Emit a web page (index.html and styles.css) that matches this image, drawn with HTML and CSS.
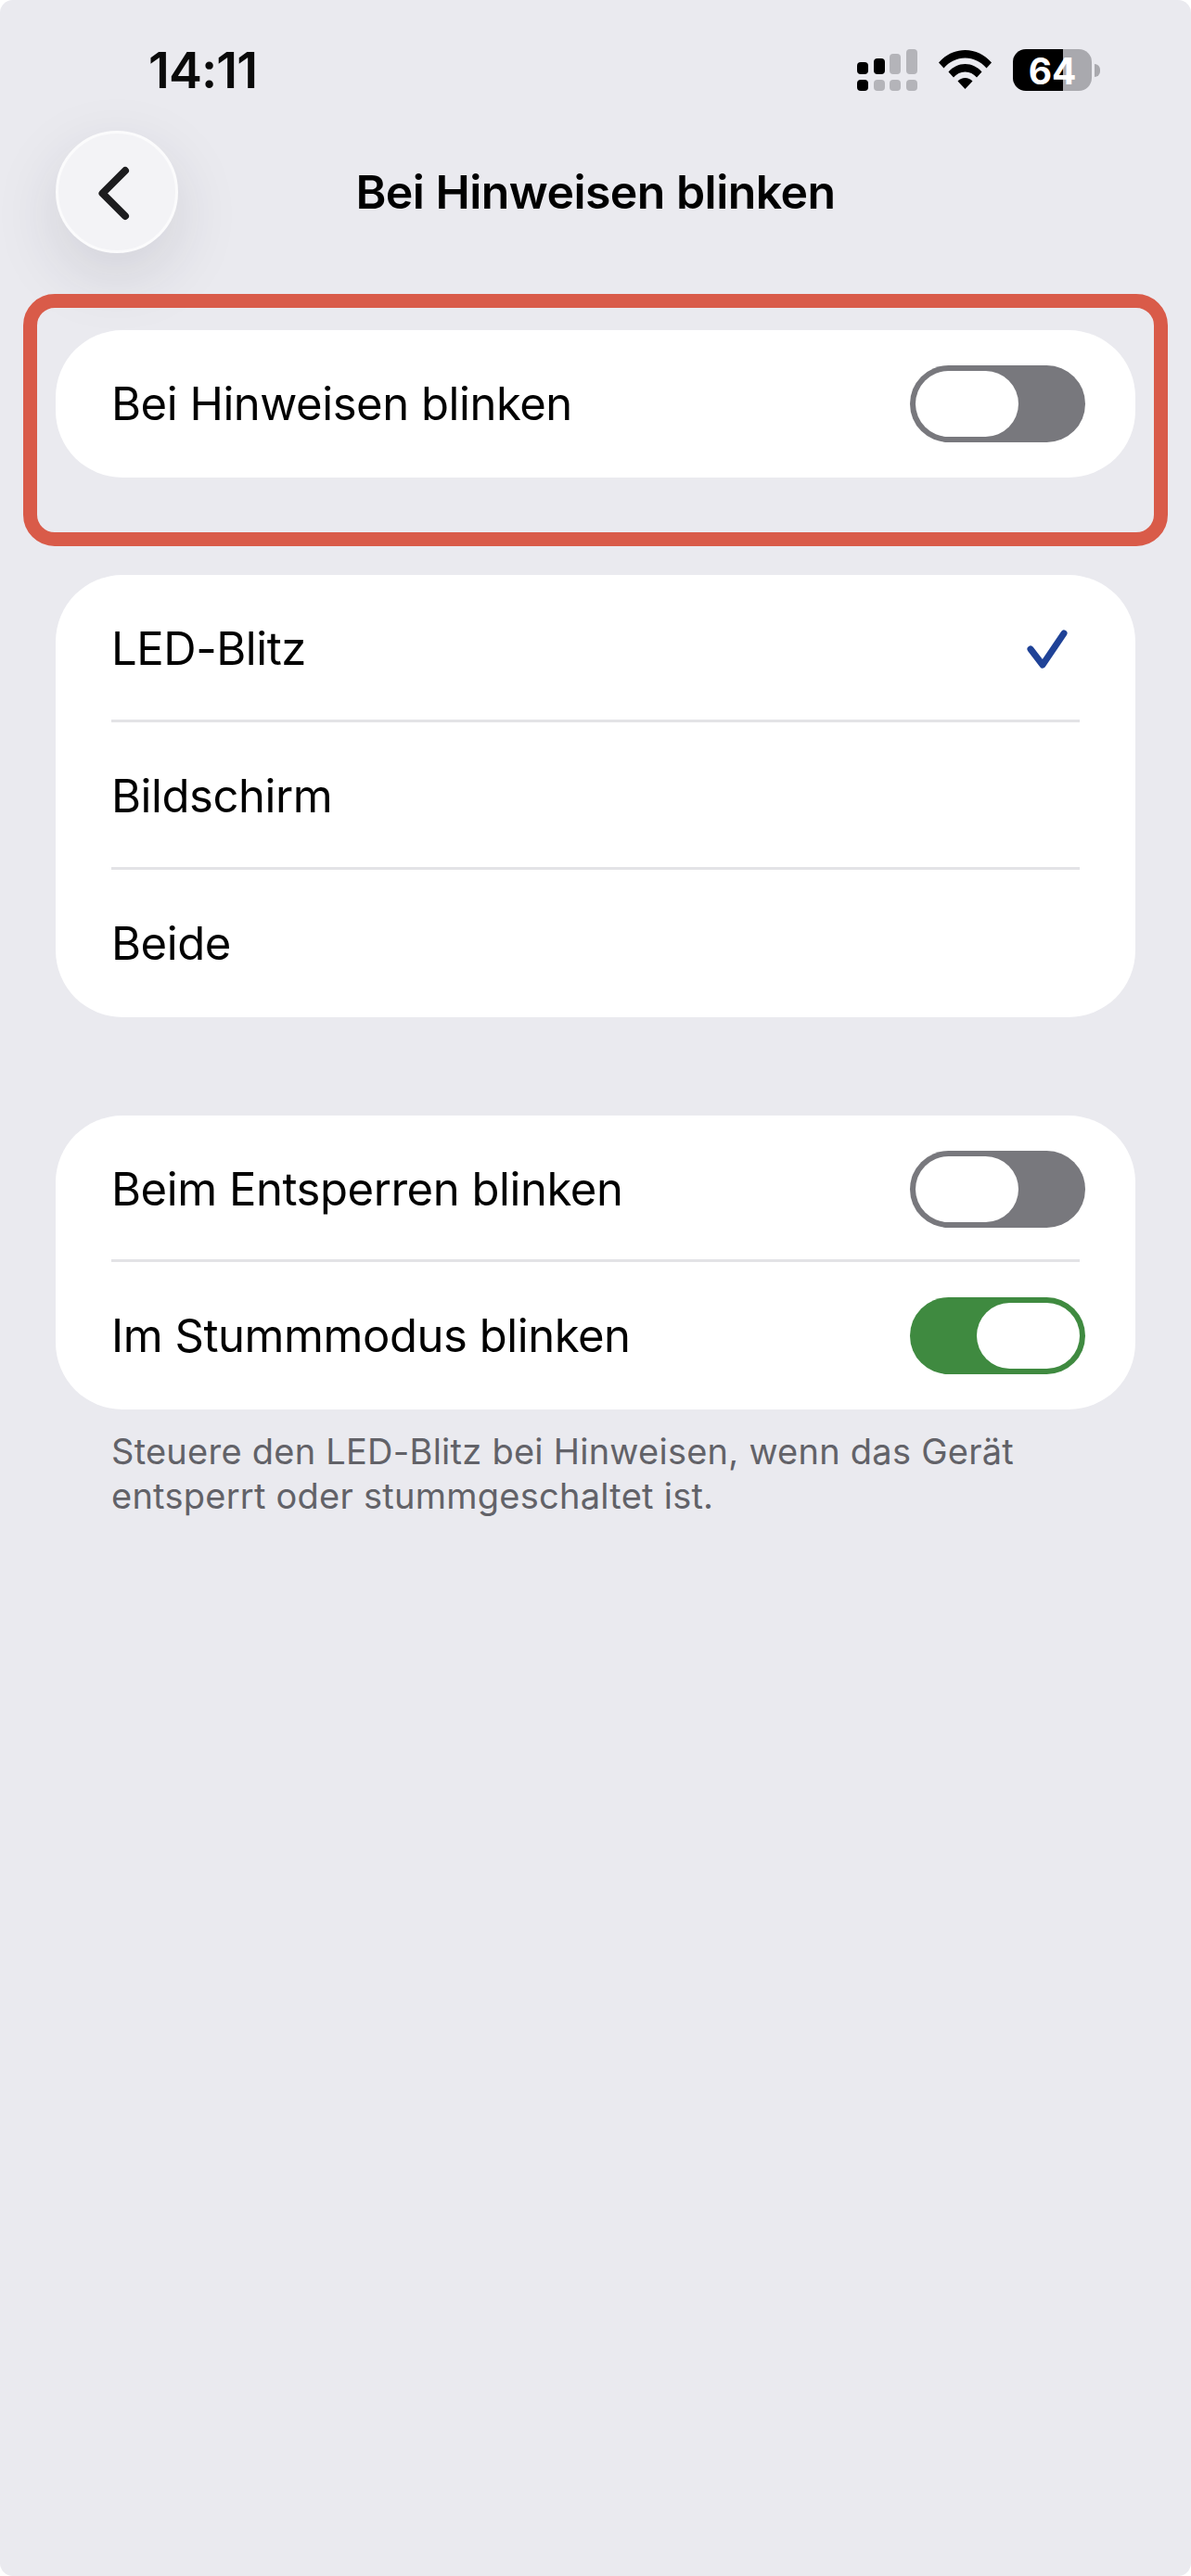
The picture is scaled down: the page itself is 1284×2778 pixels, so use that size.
FILE: index.html
```html
<!DOCTYPE html>
<html lang="de">
<head>
  <meta charset="UTF-8">
  <meta name="viewport" content="width=device-width, initial-scale=1.0">
  <title>Bei Hinweisen blinken</title>
  <link rel="stylesheet" href="styles.css">
</head>
<body>

  <!-- Statusleiste -->
  <div class="status-bar">
    <span class="time">14:11</span>
    <div class="status-icons">
      <div class="signal">
        <i class="dot on"></i><i class="dot on tall-1"></i><i class="dot tall-2"></i><i class="dot tall-3"></i>
        <i class="dot on"></i><i class="dot"></i><i class="dot"></i><i class="dot"></i>
      </div>
      <svg class="wifi" width="57" height="42" viewBox="0 0 57 42">
        <path fill="#000" d="M0 13.5C7.5 5 17.5 0 28.5 0S49.500 5 57 13.500L51.500 19.500C45.500 12.500 37.500 8.500 28.500 8.500S11.500 12.500 5.500 19.500Z"/>
        <path fill="#000" d="M10.500 23.500C15.500 18 21.500 15 28.500 15S41.500 18 46.500 23.500L41 29.500C37.500 25.500 33.500 23.500 28.500 23.500S19.500 25.500 16 29.500Z"/>
        <path fill="#000" d="M20.500 33.500C22.500 31.500 25.500 30 28.500 30S34.500 31.500 36.500 33.500L28.500 42Z"/>
      </svg>
      <div class="battery">
        <div class="battery-body"><span class="battery-level">64</span></div>
        <i class="battery-nub"></i>
      </div>
    </div>
  </div>

  <!-- Titelzeile -->
  <header class="nav">
    <button class="back" type="button" aria-label="Zurück">
      <svg width="41" height="65" viewBox="0 0 41 65">
        <path d="M29 9 L4.500 33.500 L29 58" fill="none" stroke="#1c1c1e" stroke-width="8" stroke-linecap="round" stroke-linejoin="round"/>
      </svg>
    </button>
    <h1 class="title">Bei Hinweisen blinken</h1>
  </header>

  <main class="content">
    <div class="highlight">
      <section class="card">
        <div class="row">
          <span class="label">Bei Hinweisen blinken</span>
          <span class="toggle"></span>
        </div>
      </section>
    </div>

    <section class="card card-modes">
      <div class="row">
        <span class="label">LED-Blitz</span>
        <svg class="check" width="46" height="44" viewBox="0 0 46 44">
          <path d="M5 22 L18 39 L41 5" fill="none" stroke="#1f4297" stroke-width="7" stroke-linecap="round" stroke-linejoin="round"/>
        </svg>
      </div>
      <div class="row">
        <span class="label">Bildschirm</span>
      </div>
      <div class="row">
        <span class="label">Beide</span>
      </div>
    </section>

    <section class="card card-options">
      <div class="row">
        <span class="label">Beim Entsperren blinken</span>
        <span class="toggle"></span>
      </div>
      <div class="row">
        <span class="label">Im Stummmodus blinken</span>
        <span class="toggle toggle-on"></span>
      </div>
    </section>

    <p class="hint">Steuere den LED-Blitz bei Hinweisen, wenn das Gerät entsperrt oder stummgeschaltet ist.</p>
  </main>

</body>
</html>
```

FILE: styles.css
```css
* { box-sizing: border-box; }
html { background-color: #fff; }
body { margin: 0; height: 2778px; overflow: hidden; background-color: #eaeaef; border-radius: 14px; font-family: Inter, "Liberation Sans", sans-serif; color: #000; }

/* Statusleiste */
.status-bar { height: 141px; padding: 53px 98px 0 160px; display: flex; justify-content: space-between; align-items: flex-start; }
.time { font-size: 54px; font-weight: 600; line-height: 45px; letter-spacing: -0.9px; color: #0a0a0a; }
.status-icons { display: flex; align-items: flex-start; }
.signal { width: 65px; height: 45px; display: grid; grid-template-columns: repeat(4, 12px); grid-template-rows: 27px 12px; column-gap: 5.6px; row-gap: 6px; }
.dot { display: block; height: 13px; align-self: end; background-color: #b4b4b9; border-radius: 4px; }
.dot.on { background-color: #000; }
.dot.tall-1 { height: 17px; }
.dot.tall-2 { height: 22px; }
.dot.tall-3 { height: 27px; }
.signal .dot:nth-child(n+5) { height: 12px; }
.wifi { margin: 1px 23px 0 23px; }
.battery { display: flex; align-items: center; height: 45px; }
.battery-body { width: 85px; height: 45px; border-radius: 14px; background: linear-gradient(to right, #000 54px, #a9a9ae 54px); text-align: center; }
.battery-level { display: block; font-size: 39px; font-weight: 700; line-height: 47px; color: #fff; letter-spacing: 0; }
.battery-nub { width: 6px; height: 14px; margin-left: 3px; background-color: #a9a9ae; border-radius: 0 7px 7px 0; }

/* Titelzeile */
.nav { height: 132px; padding-left: 60px; display: grid; grid-template-columns: 132px 1fr 132px; align-items: center; }
.back { width: 132px; height: 132px; padding: 0; display: flex; align-items: center; justify-content: center; background-color: #f3f3f6; border: 3px solid #fbfbfc; border-radius: 50%; box-shadow: 0 24px 70px rgba(40, 40, 60, 0.13); }
.title { margin: 0 0 0 -60px; font-size: 50px; font-weight: 600; text-align: center; letter-spacing: -0.55px; line-height: 60px; }

/* Inhalt */
.content { display: flex; flex-direction: column; }
.highlight { width: 1234px; margin: 44px 0 31px 25px; padding: 24px 20px 59px; border: 15px solid #d95b49; border-radius: 34px; }
.card { background-color: #fff; border-radius: 72px; width: 1164px; }
.card-modes, .card-options { margin-left: 60px; }
.card-options { margin-top: 106px; }
.card-options .row:first-child { height: 158px; }
.row { height: 159px; margin: 0 60px; display: flex; align-items: center; justify-content: space-between; box-shadow: inset 0 -3px 0 #e3e3e6; }
.row:last-child { box-shadow: none; }
.label { font-size: 49px; letter-spacing: -0.45px; }
.check { margin-right: 12px; }

/* Schalter */
.toggle { position: relative; width: 189px; height: 83px; margin-right: -6px; border-radius: 42px; background-color: #78787d; }
.toggle::after { content: ""; position: absolute; top: 6px; left: 6px; width: 111px; height: 71px; border-radius: 36px; background-color: #fff; }
.toggle-on { background-color: #3f8a40; }
.toggle-on::after { left: 72px; }

.hint { width: 1060px; margin: 21px 0 0 120px; font-size: 38px; line-height: 48px; letter-spacing: 0.25px; color: #626268; }
```
